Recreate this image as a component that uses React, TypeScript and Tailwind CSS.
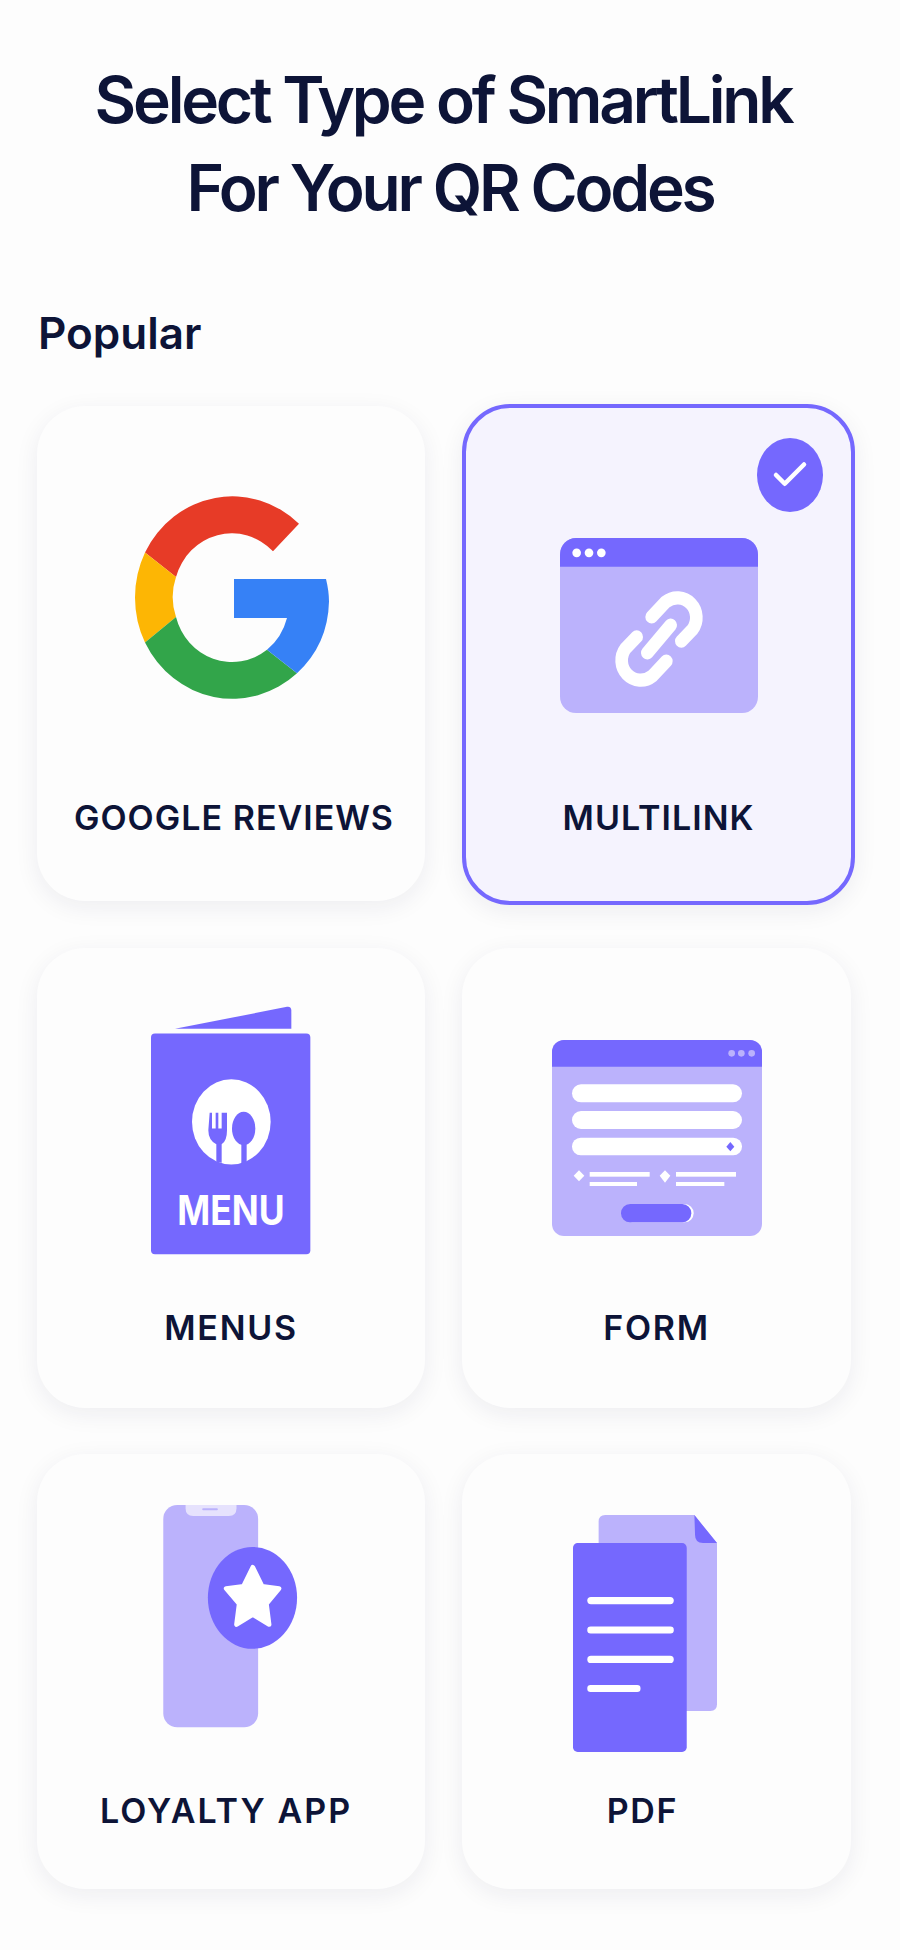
import type { ReactNode } from 'react';
import { Check } from 'lucide-react';

const PURPLE = '#7568fe';
const LILAC = '#bbb2fc';

function GoogleIcon() {
  // drawn in page coordinates, hence the viewBox offset
  return (
    <svg width="196" height="205" viewBox="134 491 196 200" preserveAspectRatio="none">
      <path d="M146 547 A98 100 0 0 1 300 519 L274 546 A58 59 0 0 0 177 571 Z" fill="#e73b27" />
      <path d="M146 547 A98 100 0 0 0 146 635 L177 610 A58 59 0 0 1 177 571 Z" fill="#fdb604" />
      <path d="M146 635 A98 100 0 0 0 298 665 L268 642 A58 59 0 0 1 177 610 Z" fill="#32a54a" />
      <path d="M235 573 L327 573 Q330 585 330 595 Q329 637 298 665 L268 642 Q283 630 288 611 L235 611 Z" fill="#3681f6" />
    </svg>
  );
}

function LinkWindowIcon() {
  return (
    <svg width="198" height="175" viewBox="328 460 594 506" preserveAspectRatio="none">
      <rect x="328" y="460" width="594" height="506" rx="48" fill={LILAC} />
      <path d="M328 543 V508 A48 48 0 0 1 376 460 H874 A48 48 0 0 1 922 508 V543 Z" fill={PURPLE} />
      <circle cx="378" cy="503" r="13" fill="#fff" />
      <circle cx="415" cy="503" r="13" fill="#fff" />
      <circle cx="452" cy="503" r="13" fill="#fff" />
      <g fill="none" stroke="#fff" strokeWidth="38" strokeLinecap="round">
        <path d="M603 688 L645 645 A57 57 0 0 1 725 725 L692 758" />
        <path d="M647 816 L605 859 A57 57 0 0 1 525 779 L558 746" />
        <path d="M590 792 L660 712" />
      </g>
    </svg>
  );
}

function MenuIcon() {
  return (
    <svg width="160" height="249" viewBox="150 78 480 746">
      <path d="M222 146 L558 80 Q571 78 571 92 L571 146 Z" fill={PURPLE} />
      <rect x="150" y="160" width="478" height="662" rx="12" fill={PURPLE} />
      <ellipse cx="391" cy="425" rx="118" ry="128" fill="#fff" />
      <path
        d="M326 398 H333 V445 H344 V398 H352 V445 H362 V398 H378 V450 Q378 482 362 492 V548 L346 545 V492 Q322 480 322 450 Z"
        fill={PURPLE}
      />
      <ellipse cx="428" cy="445" rx="35" ry="50" fill={PURPLE} />
      <path d="M421 480 H437 V545 L421 552 Z" fill={PURPLE} />
      <text
        x="390"
        y="735"
        textAnchor="middle"
        textLength="322"
        lengthAdjust="spacingAndGlyphs"
        fill="#fff"
        fontSize="122"
        fontWeight="700"
        fontFamily="Inter, sans-serif"
      >
        MENU
      </text>
    </svg>
  );
}

function FormIcon() {
  return (
    <svg width="210" height="196" viewBox="65 60 630 588">
      <rect x="65" y="60" width="630" height="588" rx="36" fill={LILAC} />
      <path d="M65 140 V96 A36 36 0 0 1 101 60 H659 A36 36 0 0 1 695 96 V140 Z" fill={PURPLE} />
      <circle cx="604" cy="100" r="10" fill={LILAC} />
      <circle cx="633" cy="100" r="10" fill={LILAC} />
      <circle cx="664" cy="100" r="10" fill={LILAC} />
      <rect x="125" y="193" width="510" height="54" rx="27" fill="#fff" />
      <rect x="125" y="273" width="510" height="54" rx="27" fill="#fff" />
      <rect x="125" y="353" width="510" height="53" rx="26" fill="#fff" />
      <path d="M600 366 L612 380 L600 394 L588 380 Z" fill={PURPLE} />
      <path d="M146 451 L162 467 L146 484 L130 467 Z" fill="#fff" />
      <path d="M404 451 L420 467 L404 488 L388 467 Z" fill="#fff" />
      <rect x="178" y="456" width="180" height="14" fill="#fff" />
      <rect x="178" y="486" width="142" height="12" fill="#fff" />
      <rect x="437" y="456" width="180" height="14" fill="#fff" />
      <rect x="437" y="486" width="145" height="12" fill="#fff" />
      <rect x="279" y="552" width="211" height="55" rx="27" fill="#fff" />
      <rect x="272" y="552" width="211" height="55" rx="27" fill={PURPLE} />
    </svg>
  );
}

function LoyaltyIcon() {
  return (
    <svg width="135" height="223" viewBox="68 75 404 670" className="mr-[2px]">
      <rect x="68" y="75" width="285" height="668" rx="42" fill={LILAC} />
      <path d="M135 75 H288 V85 Q288 108 265 108 H158 Q135 108 135 85 Z" fill="#e6e2fd" />
      <rect x="185" y="85" width="47" height="6" rx="3" fill={LILAC} />
      <ellipse cx="336" cy="354" rx="134" ry="153" fill={PURPLE} />
      <path
        d="M337 262 L365 319 L416 326 L378 372 L386 434 L337 404 L288 434 L296 372 L257 326 L309 319 Z"
        fill="#fff"
        stroke="#fff"
        strokeWidth="14"
        strokeLinejoin="round"
      />
    </svg>
  );
}

function PdfIcon() {
  return (
    <svg width="144" height="237" viewBox="65 76 433 712" className="mr-[24px]">
      <path d="M162 76 H430 L498 160 V645 Q498 665 478 665 H162 Q142 665 142 645 V96 Q142 76 162 76 Z" fill={LILAC} />
      <path d="M430 76 L498 160 H456 Q432 160 432 136 Z" fill={PURPLE} />
      <rect x="65" y="160" width="342" height="628" rx="14" fill={PURPLE} />
      <rect x="108" y="322" width="260" height="22" rx="11" fill="#fff" />
      <rect x="108" y="411" width="260" height="21" rx="10" fill="#fff" />
      <rect x="108" y="499" width="260" height="22" rx="11" fill="#fff" />
      <rect x="108" y="587" width="160" height="21" rx="10" fill="#fff" />
    </svg>
  );
}

function Card({
  label,
  icon,
  className,
  labelClassName,
  selected,
}: {
  label: string;
  icon: ReactNode;
  className: string;
  labelClassName: string;
  selected?: boolean;
}) {
  return (
    <div
      className={`relative flex flex-col items-center rounded-[48px] shadow-[0_6px_24px_rgba(30,30,70,0.07)] ${
        selected ? 'border-4 border-[#7568fe] bg-[#f5f3fe]' : 'bg-[#fdfdfd]'
      } ${className}`}
    >
      {selected && (
        <div className="absolute right-[28px] top-[30px] flex h-[74px] w-[66px] items-center justify-center rounded-[50%] bg-[#7568fe]">
          <Check className="h-[42px] w-[42px] text-white" strokeWidth={2.6} />
        </div>
      )}
      {icon}
      <div className={`mt-auto text-[34px] font-semibold leading-[40px] text-[#0d1437] ${labelClassName}`}>
        {label}
      </div>
    </div>
  );
}

export default function App() {
  return (
    <div className="h-[1950px] w-[900px] overflow-hidden bg-[#fdfdfd] font-['Inter',sans-serif]">
      <h1 className="pt-[56px] text-center text-[64px] font-semibold leading-[88px] tracking-[-0.05em] text-[#0d1437]">
        <span className="block pr-[14px]">Select Type of SmartLink</span>
        <span className="block">For Your QR Codes</span>
      </h1>
      <h2 className="mt-[73px] pl-[38px] text-[44px] font-semibold leading-[56px] text-[#0d1437]">Popular</h2>

      <div className="mt-[45px] grid grid-cols-[388px_389px] gap-x-[37px] pl-[37px]">
        <Card
          label="GOOGLE REVIEWS"
          icon={<GoogleIcon />}
          className="h-[495px] pt-[89px] pb-[63px]"
          labelClassName="ml-[6px] tracking-[0.03em]"
        />
        <Card
          label="MULTILINK"
          icon={<LinkWindowIcon />}
          selected
          className="-mt-[2px] -mb-[4px] -mr-[4px] h-[501px] pt-[130px] pb-[63px]"
          labelClassName="tracking-[0.03em]"
        />
        <Card
          label="MENUS"
          icon={<MenuIcon />}
          className="mt-[47px] h-[460px] pt-[58px] pb-[60px]"
          labelClassName="tracking-[0.05em]"
        />
        <Card
          label="FORM"
          icon={<FormIcon />}
          className="mt-[47px] h-[460px] pt-[92px] pb-[60px]"
          labelClassName="tracking-[0.05em]"
        />
        <Card
          label="LOYALTY APP"
          icon={<LoyaltyIcon />}
          className="mt-[46px] h-[435px] pt-[51px] pb-[58px]"
          labelClassName="mr-[10px] tracking-[0.06em]"
        />
        <Card
          label="PDF"
          icon={<PdfIcon />}
          className="mt-[46px] h-[435px] pt-[61px] pb-[58px]"
          labelClassName="mr-[28px] tracking-[0.05em]"
        />
      </div>
    </div>
  );
}
